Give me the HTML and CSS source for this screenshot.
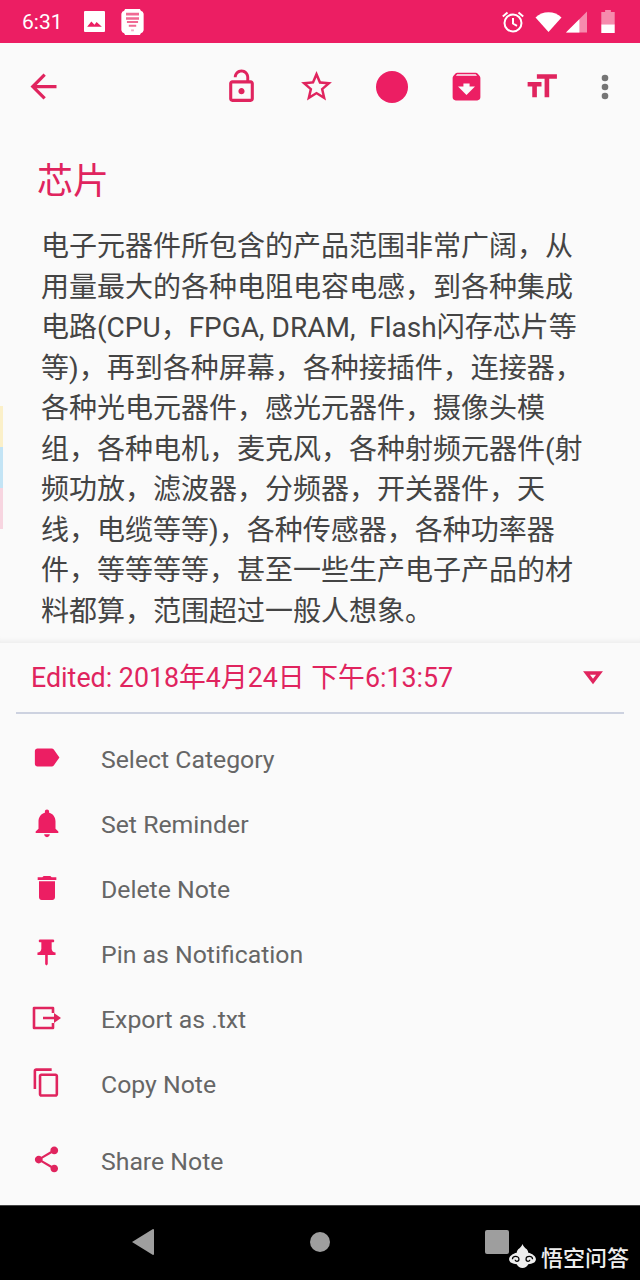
FILE: index.html
```html
<!DOCTYPE html>
<html lang="zh">
<head>
<meta charset="utf-8">
<title>芯片</title>
<link rel="stylesheet" href="styles.css">
</head>
<body>
<div class="phone">
  <header class="status">
    <div class="status-left">
      <span class="time">6:31</span>
      <svg class="st-pic" viewBox="0 0 20 20"><path fill="#fff" d="M1 0h18a1 1 0 0 1 1 1v18a1 1 0 0 1-1 1H1a1 1 0 0 1-1-1V1a1 1 0 0 1 1-1z"/><path fill="#ec1e63" d="M3 15l4-5 3 3 2-2.500 5 4.500z"/></svg>
      <svg class="st-note" viewBox="0 0 24 28"><path fill="#fff" d="M4 0h16l1 2 2 1 1 2v18l-1 2-2 1-1 2H4l-1-2-2-1-1-2V5l1-2 2-1z"/><path fill="#f06a94" d="M5 4h14v3H5zM5 9h14v2.500H5zM6 13h12v2H6zM8 17h8v2H8z"/><rect x="10.500" y="22" width="3" height="2" fill="#f5a8c2"/></svg>
    </div>
    <div class="status-right">
      <svg class="st-alarm" viewBox="0 0 24 24"><path fill="none" stroke="#fff" stroke-width="2" d="M12 4.500a8.500 8.500 0 1 0 0 17 8.500 8.500 0 0 0 0-17zM12 8v5.500l4 2.300M1.800 6.500L6.500 2.600M22.200 6.500L17.500 2.600"/></svg>
      <svg class="st-wifi" viewBox="0 0 26 20"><path fill="#fff" d="M13 20L0 5.500C3.500 2.200 8 .3 13 .3s9.500 1.900 13 5.200z"/></svg>
      <svg class="st-signal" viewBox="0 0 22 22"><path fill="#f68bad" d="M22 0v22H0z"/><path fill="#fff" d="M14 8v14H0z"/></svg>
      <svg class="st-batt" viewBox="0 0 14 24"><path fill="#f68bad" d="M4 0h6v2h4v13H0V2h4z"/><rect y="15" width="14" height="9" fill="#fff"/></svg>
    </div>
  </header>

  <nav class="toolbar">
    <svg class="tb-back" viewBox="0 0 24 24"><path fill="#e0245e" d="M20 11H7.830l5.590-5.590L12 4l-8 8 8 8 1.410-1.410L7.830 13H20v-2z"/></svg>
    <div class="tb-actions">
      <span class="tb-slot"><svg class="tb-ic" viewBox="0 0 24 24"><path fill="#e0245e" d="M12 17c1.100 0 2-.9 2-2s-.9-2-2-2-2 .9-2 2 .9 2 2 2zm6-9h-1V6c0-2.760-2.240-5-5-5S7 3.240 7 6h1.900c0-1.710 1.390-3.100 3.100-3.100 1.710 0 3.100 1.390 3.100 3.100v2H6c-1.100 0-2 .9-2 2v10c0 1.100.9 2 2 2h12c1.100 0 2-.9 2-2V10c0-1.100-.9-2-2-2zm0 12H6V10h12v10z"/></svg></span>
      <span class="tb-slot"><svg class="tb-ic" viewBox="0 0 24 24"><path fill="#e0245e" d="M22 9.240l-7.190-.62L12 2 9.190 8.630 2 9.240l5.460 4.730L5.820 21 12 17.270 18.180 21l-1.630-7.030L22 9.240zM12 15.400l-3.760 2.270 1-4.280-3.320-2.880 4.380-.38L12 6.100l1.710 4.040 4.380.38-3.320 2.880 1 4.280L12 15.400z"/></svg></span>
      <span class="tb-slot"><span class="tb-dot"></span></span>
      <span class="tb-slot"><svg class="tb-ic" viewBox="0 0 24 24"><path fill="#ec1e63" d="M20.540 5.230l-1.390-1.680C18.880 3.210 18.470 3 18 3H6c-.47 0-.88.21-1.160.55L3.460 5.230C3.170 5.570 3 6.020 3 6.500V19c0 1.100.9 2 2 2h14c1.100 0 2-.9 2-2V6.500c0-.48-.17-.93-.46-1.270zM12 17.500L6.500 12H10v-2h4v2h3.500L12 17.500zM5.120 5l.81-1h12l.94 1H5.120z"/></svg></span>
      <span class="tb-slot"><svg class="tb-ic" viewBox="0 0 24 24"><path fill="#e0245e" d="M9 4v3h5v12h3V7h5V4H9zm-6 8h3v7h3v-7h3V9H3v3z"/></svg></span>
    </div>
    <svg class="tb-more" viewBox="0 0 8 26"><circle cx="4" cy="4" r="3.300" fill="#757575"/><circle cx="4" cy="13" r="3.300" fill="#757575"/><circle cx="4" cy="22" r="3.300" fill="#757575"/></svg>
  </nav>

  <main class="note">
    <h1 class="note-title">芯片</h1>
    <p class="note-body">电子元器件所包含的产品范围非常广阔，从<br>用量最大的各种电阻电容电感，到各种集成<br>电路(CPU，FPGA, DRAM, &nbsp;Flash闪存芯片等<br>等)，再到各种屏幕，各种接插件，连接器，<br>各种光电元器件，感光元器件，摄像头模<br>组，各种电机，麦克风，各种射频元器件(射<br>频功放，滤波器，分频器，开关器件，天<br>线，电缆等等)，各种传感器，各种功率器<br>件，等等等等，甚至一些生产电子产品的材<br>料都算，范围超过一般人想象。</p>
    <div class="swatches"><span class="sw sw-y"></span><span class="sw sw-b"></span><span class="sw sw-p"></span></div>
  </main>

  <section class="sheet">
    <div class="edited">
      <span>Edited: 2018年4月24日 下午6:13:57</span>
      <svg class="caret" viewBox="0 0 20 14"><path fill="none" stroke="#e0245e" stroke-width="3.400" d="M3.500 2h13L10 10.500z"/></svg>
    </div>
    <ul class="menu">
      <li class="item">
        <svg class="ic" viewBox="0 0 24 24"><path fill="#ec1e63" d="M17.630 5.840C17.270 5.330 16.670 5 16 5L5 5.010C3.900 5.010 3 5.900 3 7v10c0 1.100.9 1.990 2 1.990L16 19c.67 0 1.270-.33 1.630-.84L22 12l-4.370-6.160z"/></svg>
        <span>Select Category</span>
      </li>
      <li class="item">
        <svg class="ic ic-bell" viewBox="0 0 24 24"><path fill="#ec1e63" d="M12 22c1.100 0 2-.9 2-2h-4c0 1.100.89 2 2 2zm6-6v-5c0-3.070-1.640-5.640-4.500-6.320V4c0-.83-.67-1.500-1.500-1.500s-1.500.67-1.500 1.500v.68C7.630 5.360 6 7.920 6 11v5l-2 2v1h16v-1l-2-2z"/></svg>
        <span>Set Reminder</span>
      </li>
      <li class="item">
        <svg class="ic ic-trash" viewBox="0 0 24 24"><path fill="#ec1e63" d="M6 19c0 1.100.9 2 2 2h8c1.100 0 2-.9 2-2V7H6v12zM19 4h-3.500l-1-1h-5l-1 1H5v2h14V4z"/></svg>
        <span>Delete Note</span>
      </li>
      <li class="item">
        <svg class="ic" viewBox="0 0 24 24"><path fill="#ec1e63" d="M16 9V4h1c.55 0 1-.45 1-1s-.45-1-1-1H7c-.55 0-1 .45-1 1s.45 1 1 1h1v5c0 1.660-1.340 3-3 3v2h5.970v7l1 1 1-1v-7H19v-2c-1.660 0-3-1.340-3-3z"/></svg>
        <span>Pin as Notification</span>
      </li>
      <li class="item">
        <svg class="ic ic-export" viewBox="0 0 30 24"><path fill="none" stroke="#e0245e" stroke-width="2.600" stroke-linejoin="round" d="M21 7V2H2v20h19v-5M11 12h14"/><path fill="#e0245e" d="M22 7l7 5-7 5z"/></svg>
        <span>Export as .txt</span>
      </li>
      <li class="item">
        <svg class="ic" viewBox="0 0 24 24"><path fill="#e0245e" d="M16 1H4c-1.100 0-2 .9-2 2v14h2V3h12V1zm3 4H8c-1.100 0-2 .9-2 2v14c0 1.100.9 2 2 2h11c1.100 0 2-.9 2-2V7c0-1.100-.9-2-2-2zm0 16H8V7h11v14z"/></svg>
        <span>Copy Note</span>
      </li>
      <li class="item item-share">
        <svg class="ic" viewBox="0 0 24 24"><path fill="#e0245e" d="M18 16.080c-.76 0-1.440.3-1.960.77L8.910 12.700c.05-.23.09-.46.09-.7s-.04-.47-.09-.7l7.050-4.110c.54.5 1.250.81 2.040.81 1.660 0 3-1.340 3-3s-1.340-3-3-3-3 1.340-3 3c0 .24.04.47.09.7L8.040 9.810C7.500 9.310 6.790 9 6 9c-1.660 0-3 1.340-3 3s1.340 3 3 3c.79 0 1.500-.31 2.040-.81l7.120 4.160c-.05.21-.08.43-.08.650 0 1.610 1.310 2.920 2.920 2.920 1.610 0 2.920-1.310 2.920-2.920s-1.310-2.920-2.920-2.920z"/></svg>
        <span>Share Note</span>
      </li>
    </ul>
  </section>

  <footer class="navbar">
    <svg class="nav-back" viewBox="0 0 22 26"><path fill="#9e9e9e" d="M21 0a1 1 0 0 1 1 1v24a1 1 0 0 1-1 1L0 13z"/></svg>
    <span class="nav-home"></span>
    <span class="nav-recent"></span>
    <div class="watermark">
      <svg class="wm-logo" viewBox="0 0 28 25"><path fill="#eee" d="M14 0c1 2.500 2.500 4 4.500 5.500 1 1.500 1.500 2.500 1.500 3.500 4 .8 8 3.500 8 7 0 2.500-2 4-5 4.500-1 .3-2 .5-3 .5-1 2.500-3.500 4-6 4s-5-1.500-6-4c-1 0-2-.2-3-.5C2 20 0 18.500 0 16c0-3.500 4-6.200 8-7 0-1 .5-2 1.500-3.500C11.500 4 13 2.500 14 0z"/><path fill="none" stroke="#000" stroke-width="1.300" d="M3.500 16c0-2 1.500-3 3.300-3 2 0 3.500 1.200 3.500 2.800 0 1.300-1 2.200-2.200 2.200-1 0-1.800-.6-1.800-1.500M24.500 16c0-2-1.500-3-3.300-3-2 0-3.500 1.200-3.500 2.800 0 1.300 1 2.200 2.200 2.200 1 0 1.800-.6 1.800-1.500"/></svg>
      <span>悟空问答</span>
    </div>
  </footer>
</div>
</body>
</html>
```

FILE: styles.css
```css
* { box-sizing: border-box; }
html, body { margin: 0; padding: 0; }
body { background: #fafafa; font-family: Roboto, "Noto Sans CJK SC", sans-serif; }
.phone { width: 640px; height: 1280px; display: flex; flex-direction: column; overflow: hidden; background: #fafafa; }

.status { flex: 0 0 43px; height: 43px; background: #ec1e63; display: flex; justify-content: space-between; align-items: center; padding: 0 25px 0 22px; }
.status-left { display: flex; align-items: center; }
.status-right { display: flex; align-items: center; }
.time { color: #fff; font-size: 21px; font-weight: 400; width: 62px; }
.st-pic { width: 21px; height: 21px; margin-right: 16px; }
.st-note { width: 23px; height: 26px; }
.st-alarm { width: 24px; height: 24px; margin-right: 10px; }
.st-wifi { width: 27px; height: 20px; margin-right: 4px; }
.st-signal { width: 21px; height: 22px; margin-right: 14px; }
.st-batt { width: 14px; height: 23px; }

.toolbar { flex: 0 0 87px; height: 87px; display: flex; align-items: center; padding-left: 24px; }
.tb-back { width: 39px; height: 39px; }
.tb-actions { display: flex; align-items: center; margin-left: 141px; }
.tb-slot { width: 75px; display: flex; justify-content: center; align-items: center; }
.tb-ic { width: 37px; height: 37px; }
.tb-dot { width: 32px; height: 32px; border-radius: 50%; background: #ec1e63; }
.tb-more { width: 8px; height: 26px; margin-left: 22px; }

.note { flex: 0 0 512px; height: 512px; position: relative; padding: 25px 0 0 37px; box-shadow: inset 0 -6px 6px -6px rgba(0,0,0,.08); overflow: hidden; }
.note-title { margin: 0; font-size: 36px; line-height: 46px; font-weight: 400; color: #e0245e; font-family: "Noto Sans CJK SC", sans-serif; }
.note-body { margin: 26px 0 0 4px; font-size: 28px; line-height: 40.550px; color: #444; white-space: nowrap; }
.swatches { position: absolute; left: 0; top: 276px; width: 3px; display: flex; flex-direction: column; }
.sw { display: block; height: 41px; }
.sw-y { background: #fbf0c9; }
.sw-b { background: #c3e4f5; }
.sw-p { background: #f7d5e0; }

.sheet { flex: 0 0 563px; height: 563px; display: flex; flex-direction: column; padding: 0 16px; background: #fafafa; border-top: 1px solid #f0f0f0; }
.edited { flex: 0 0 71px; height: 71px; display: flex; justify-content: space-between; align-items: center; border-bottom: 2px solid #cdd2e0; padding: 0 21px 5px 15px; color: #e0245e; font-size: 26.800px; }
.caret { width: 20px; height: 14px; margin-top: 5px; }
.menu { list-style: none; margin: 0; padding: 0; display: flex; flex-direction: column; }
.item { height: 65px; display: grid; grid-template-columns: 61px 1fr; align-items: center; color: #666; font-size: 24.800px; }
.item:first-child { margin-top: 13px; }
.item-share { margin-top: 12px; }
.ic { width: 31px; height: 31px; justify-self: center; margin-top: -4px; }
.ic-bell { width: 34px; height: 34px; }
.ic-trash { width: 32px; height: 32px; }
.ic-export { width: 30px; height: 24px; }
.item span { padding-left: 24px; }

.navbar { flex: 0 0 75px; height: 75px; background: #000; position: relative; border-top: 1px solid #444; display: flex; align-items: center; }
.nav-back { width: 22px; height: 26px; margin-left: 132px; margin-top: -3px; }
.nav-home { width: 20px; height: 20px; border-radius: 50%; background: #9e9e9e; margin-left: 156px; margin-top: -3px; }
.nav-recent { width: 24px; height: 24px; background: #9e9e9e; border-radius: 2px; margin-left: 155px; margin-top: -3px; }
.watermark { position: absolute; right: 11px; top: 37px; display: flex; align-items: center; color: #eee; font-size: 22px; line-height: 26px; font-family: "Noto Sans CJK SC", sans-serif; font-weight: 500; }
.wm-logo { width: 27px; height: 24px; margin-right: 5px; }
```
